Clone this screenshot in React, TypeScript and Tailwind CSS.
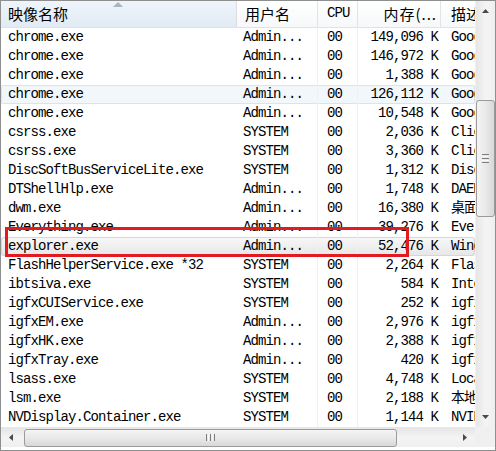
import React from "react";

const rows: [string, string, string, string, string][] = [
  ["chrome.exe", "Admin...", "00", "149,096 K", "Google Chrome"],
  ["chrome.exe", "Admin...", "00", "146,972 K", "Google Chrome"],
  ["chrome.exe", "Admin...", "00", "1,388 K", "Google Chrome"],
  ["chrome.exe", "Admin...", "00", "126,112 K", "Google Chrome"],
  ["chrome.exe", "Admin...", "00", "10,548 K", "Google Chrome"],
  ["csrss.exe", "SYSTEM", "00", "2,036 K", "Client Server"],
  ["csrss.exe", "SYSTEM", "00", "3,360 K", "Client Server"],
  ["DiscSoftBusServiceLite.exe", "SYSTEM", "00", "1,312 K", "DiscSoft"],
  ["DTShellHlp.exe", "Admin...", "00", "1,748 K", "DAEMON Tools"],
  ["dwm.exe", "Admin...", "00", "16,380 K", "桌面窗口管理器"],
  ["Everything.exe", "Admin...", "00", "39,276 K", "Everything"],
  ["explorer.exe", "Admin...", "00", "52,476 K", "Windows 资源管理器"],
  ["FlashHelperService.exe *32", "SYSTEM", "00", "2,264 K", "Flash Helper"],
  ["ibtsiva.exe", "SYSTEM", "00", "584 K", "Intel"],
  ["igfxCUIService.exe", "SYSTEM", "00", "252 K", "igfxCUIService"],
  ["igfxEM.exe", "Admin...", "00", "2,976 K", "igfxEM"],
  ["igfxHK.exe", "Admin...", "00", "2,388 K", "igfxHK"],
  ["igfxTray.exe", "Admin...", "00", "420 K", "igfxTray"],
  ["lsass.exe", "SYSTEM", "00", "4,748 K", "Local Security"],
  ["lsm.exe", "SYSTEM", "00", "2,188 K", "本地会话管理器服务"],
  ["NVDisplay.Container.exe", "SYSTEM", "00", "1,144 K", "NVIDIA"],
];

const mono = { fontFamily: "'Liberation Mono', 'Noto Sans CJK SC', monospace" };
const cjk = { fontFamily: "'Noto Sans CJK SC', 'Liberation Sans', sans-serif" };

function Row({ r, i }: { r: [string, string, string, string, string]; i: number }) {
  const state =
    i === 3
      ? "bg-[#f2f7fc] shadow-[inset_0_0_0_1px_#d7e5f2] rounded-[2px]"
      : i === 11
      ? "bg-linear-to-b from-[#f8f8f8] to-[#e6e6e6] shadow-[inset_0_0_0_1px_#d6d6d6] rounded-[3px]"
      : "";
  return (
    <div className={`flex h-[19px] leading-[19px] text-[14px] tracking-[-0.9px] text-black whitespace-nowrap ${state}`} style={mono}>
      <div className="w-[236px] pl-[7px] overflow-hidden">{r[0]}</div>
      <div className="w-[81px] pl-[6px] overflow-hidden border-r border-[#f1f1f1]">{r[1]}</div>
      <div className="w-[40px] pl-[9px] overflow-hidden border-r border-[#f1f1f1]">{r[2]}</div>
      <div className="w-[83px] pr-[3px] text-right overflow-hidden">{r[3]}</div>
      <div className="flex-1 pl-[10px] overflow-hidden">{r[4]}</div>
    </div>
  );
}

function Tri({ dir }: { dir: "up" | "down" | "left" | "right" }) {
  const pts =
    dir === "up"
      ? "0,4 3.5,0 7,4"
      : dir === "down"
      ? "0,0 7,0 3.5,4"
      : dir === "left"
      ? "4,0 4,7 0,3.5"
      : "0,0 4,3.5 0,7";
  const w = dir === "up" || dir === "down" ? 7 : 4;
  const h = dir === "up" || dir === "down" ? 4 : 7;
  return (
    <svg width={w} height={h} viewBox={`0 0 ${w} ${h}`}>
      <polygon points={pts} fill="#4a4a4a" />
    </svg>
  );
}

export default function App() {
  return (
    <div className="relative w-[496px] h-[451px] border border-[#8e8f8f] bg-white flex flex-col overflow-hidden">
      <div className="flex h-[426px]">
        {/* list */}
        <div className="w-[474px] flex flex-col overflow-hidden">
          {/* header */}
          <div className="flex h-[27px] shrink-0 border-b border-[#dfe3e8] bg-linear-to-b from-white to-[#f7f8f9] text-[15px] text-black whitespace-nowrap">
            <div className="relative w-[236px] pl-[7px] leading-[25px] border-r border-[#dcdcdc] bg-linear-to-b from-[#eef4fa] to-[#e1ebf5]" style={cjk}>
              映像名称
              <svg className="absolute left-[112px] top-[1px]" width="10" height="5" viewBox="0 0 10 5">
                <polygon points="0,5 5,0 10,5" fill="#a7b4c2" />
              </svg>
            </div>
            <div className="w-[81px] pl-[8px] leading-[25px] border-r border-[#e3e3e3]" style={cjk}>
              用户名
            </div>
            <div className="w-[40px] pl-[9px] leading-[25px] border-r border-[#e3e3e3] text-[14px] tracking-[-0.9px]" style={mono}>
              CPU
            </div>
            <div className="w-[83px] pr-[3px] text-right leading-[25px] border-r border-[#e3e3e3] overflow-hidden tracking-[1px]" style={cjk}>
              内存(...
            </div>
            <div className="flex-1 pl-[10px] leading-[25px] overflow-hidden" style={cjk}>
              描述
            </div>
          </div>
          {rows.map((r, i) => (
            <Row key={i} r={r} i={i} />
          ))}
        </div>
        {/* vertical scrollbar */}
        <div className="flex-1 flex flex-col bg-linear-to-r from-[#e6e6e6] via-[#f4f4f4] to-[#efefef] border-l border-[#f0f0f0]">
          <div className="h-[20px] flex items-center justify-center">
            <Tri dir="up" />
          </div>
          <div className="flex-1">
            <div className="mt-[79px] h-[117px] rounded-[3px] border border-[#9b9b9b] bg-linear-to-r from-[#f4f4f4] via-[#e9e9e9] to-[#d8d8d8] flex flex-col items-center justify-center gap-[1px]">
              <div className="w-[7px] h-[1px] bg-[#7d7d7d]" />
              <div className="w-[7px] h-[1px] bg-[#f8f8f8]" />
              <div className="w-[7px] h-[1px] bg-[#7d7d7d]" />
              <div className="w-[7px] h-[1px] bg-[#f8f8f8]" />
              <div className="w-[7px] h-[1px] bg-[#7d7d7d]" />
            </div>
          </div>
          <div className="h-[20px] flex items-center justify-center">
            <Tri dir="down" />
          </div>
        </div>
      </div>
      {/* horizontal scrollbar */}
      <div className="flex h-[20px]">
        <div className="w-[474px] flex bg-linear-to-b from-[#e6e6e6] via-[#f4f4f4] to-[#efefef] border-t border-[#e8e8e8]">
          <div className="w-[20px] flex items-center justify-center">
            <Tri dir="left" />
          </div>
          <div className="flex-1 flex items-center">
            <div className="ml-[3px] w-[373px] h-[18px] rounded-[3px] border border-[#9b9b9b] bg-linear-to-b from-[#f4f4f4] via-[#e9e9e9] to-[#d8d8d8] flex items-center justify-center gap-[1px]">
              <div className="w-[1px] h-[7px] bg-[#7d7d7d]" />
              <div className="w-[1px] h-[7px] bg-[#f8f8f8]" />
              <div className="w-[1px] h-[7px] bg-[#7d7d7d]" />
              <div className="w-[1px] h-[7px] bg-[#f8f8f8]" />
              <div className="w-[1px] h-[7px] bg-[#7d7d7d]" />
            </div>
          </div>
          <div className="w-[20px] flex items-center justify-center">
            <Tri dir="right" />
          </div>
        </div>
        <div className="flex-1 bg-[#f0f0f0]" />
      </div>
      <div className="h-[3px] bg-white" />
      {/* red annotation */}
      <div className="absolute left-[4px] top-[226px] w-[404px] h-[30px] border-[3px] border-[#e21a22]" />
    </div>
  );
}
